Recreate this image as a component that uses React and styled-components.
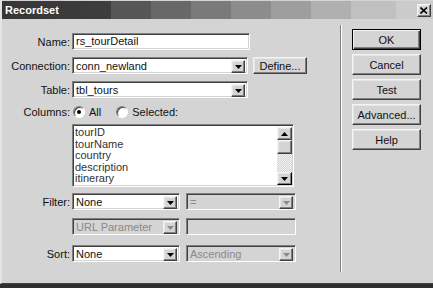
import React from "react";
import styled, { createGlobalStyle, css } from "styled-components";

const FACE = "#d4d4d4";

const Global = createGlobalStyle`
  *, *::before, *::after { box-sizing: border-box; }
  html, body { margin: 0; padding: 0; background: #2e2e2e; }
  body {
    font-family: "Liberation Sans", Arial, sans-serif;
    font-size: 11px;
    color: #111;
  }
`;

const sunken = css`
  border: 1px solid;
  border-color: #808080 #ffffff #ffffff #808080;
  box-shadow: inset 1px 1px #404040, inset -1px -1px ${FACE};
`;

const raised = css`
  border: 1px solid;
  border-color: #f4f4f4 #404040 #404040 #f4f4f4;
  box-shadow: inset -1px -1px #808080, inset 1px 1px #e6e6e6;
  background: ${FACE};
`;

function Arrow({ dir = "down", disabled }) {
  const pts = dir === "down" ? "0,0 7,0 3.5,4" : "0,4 7,4 3.5,0";
  return (
    <svg width="7" height="4" viewBox="0 0 7 4">
      <polygon points={pts} fill={disabled ? "#8a8a8a" : "#000"} />
    </svg>
  );
}

export default function App() {
  return (
    <>
      <Global />
      <Window>
        <TitleBar>
          <Title>Recordset</Title>
          <CloseButton>
            <svg width="8" height="7" viewBox="0 0 8 7">
              <path d="M0.5 0.5 L7 6.5 M7 0.5 L0.5 6.5" stroke="#000" strokeWidth="1.6" />
            </svg>
          </CloseButton>
        </TitleBar>
        <Body>
          <Form>
            <Field $mt={0}>
              <Label>Name:</Label>
              <TextBox $w={178}>rs_tourDetail</TextBox>
            </Field>
            <Field $mt={7}>
              <Label>Connection:</Label>
              <Controls>
                <Select value="conn_newland" w={176} />
                <PushButton $w={54} $h={17}>Define...</PushButton>
              </Controls>
            </Field>
            <Field $mt={7}>
              <Label>Table:</Label>
              <Select value="tbl_tours" w={176} />
            </Field>
            <Field $mt={7} $h={14}>
              <Label>Columns:</Label>
              <RadioGroup>
                <RadioOption>
                  <Radio $checked />
                  All
                </RadioOption>
                <RadioOption>
                  <Radio />
                  Selected:
                </RadioOption>
              </RadioGroup>
            </Field>
            <Field $mt={5} $h={63}>
              <span />
              <ListBox>
                <Items>
                  {["tourID", "tourName", "country", "description", "itinerary"].map(c => (
                    <Item key={c}>{c}</Item>
                  ))}
                </Items>
                <ScrollBar>
                  <ScrollButton><Arrow dir="up" /></ScrollButton>
                  <Thumb />
                  <Track />
                  <ScrollButton $focus><Arrow /></ScrollButton>
                </ScrollBar>
              </ListBox>
            </Field>
            <Field $mt={6}>
              <Label>Filter:</Label>
              <Controls $gap={6}>
                <Select value="None" w={108} />
                <Select value="=" w={110} disabled />
              </Controls>
            </Field>
            <Field $mt={8}>
              <span />
              <Controls $gap={6}>
                <Select value="URL Parameter" w={108} disabled />
                <TextBox $w={110} $disabled />
              </Controls>
            </Field>
            <Field $mt={10}>
              <Label>Sort:</Label>
              <Controls $gap={6}>
                <Select value="None" w={108} />
                <Select value="Ascending" w={110} disabled />
              </Controls>
            </Field>
          </Form>
          <Divider />
          <ButtonColumn>
            <PushButton $default>OK</PushButton>
            <PushButton>Cancel</PushButton>
            <PushButton>Test</PushButton>
            <PushButton>Advanced...</PushButton>
            <PushButton>Help</PushButton>
          </ButtonColumn>
        </Body>
      </Window>
    </>
  );
}

function Select({ value, w, disabled }) {
  return (
    <SelectBox $w={w} $disabled={disabled}>
      <SelectValue $disabled={disabled}>{value}</SelectValue>
      <DropButton>
        <Arrow disabled={disabled} />
      </DropButton>
    </SelectBox>
  );
}

const Window = styled.div`
  width: 433px;
  height: 284px;
  background: ${FACE};
  border-left: 2px solid #e4e4e4;
  border-bottom: 1px solid #404040;
  display: flex;
  flex-direction: column;
  overflow: hidden;
`;

const TitleBar = styled.div`
  height: 18px;
  margin-top: 1px;
  margin-left: -1px;
  display: flex;
  align-items: center;
  justify-content: space-between;
  padding: 0 2px 0 4px;
  background: linear-gradient(
    to right,
    #363636 0px, #3e3e3e 110px,
    #565656 110px, #565656 150px,
    #686868 150px, #686868 190px,
    #7a7a7a 190px, #7a7a7a 230px,
    #8c8c8c 230px, #8c8c8c 270px,
    #9e9e9e 270px, #9e9e9e 310px,
    #b0b0b0 310px, #b0b0b0 350px,
    #c0c0c0 350px, #c0c0c0 395px,
    #cbcbcb 395px
  );
`;

const Title = styled.span`
  color: #fff;
  font-weight: bold;
  font-size: 11px;
`;

const CloseButton = styled.div`
  ${raised};
  width: 14px;
  height: 13px;
  display: flex;
  align-items: center;
  justify-content: center;
`;

const Body = styled.div`
  flex: 1;
  display: flex;
`;

const Form = styled.div`
  width: 338px;
  padding-top: 14px;
  display: flex;
  flex-direction: column;
`;

const Field = styled.div`
  display: grid;
  grid-template-columns: 68px auto;
  column-gap: 2px;
  align-items: center;
  height: ${p => p.$h || 17}px;
  margin-top: ${p => p.$mt}px;
`;

const Label = styled.span`
  text-align: right;
  white-space: nowrap;
`;

const Controls = styled.div`
  display: flex;
  align-items: center;
  gap: ${p => p.$gap ?? 5}px;
  height: 100%;
`;

const TextBox = styled.div`
  ${sunken};
  width: ${p => p.$w}px;
  height: 17px;
  padding: 0 3px;
  line-height: 15px;
  background: ${p => (p.$disabled ? FACE : "#fff")};
`;

const SelectBox = styled.div`
  ${sunken};
  width: ${p => p.$w}px;
  height: 17px;
  display: flex;
  padding: 2px;
  background: ${p => (p.$disabled ? FACE : "#fff")};
`;

const SelectValue = styled.span`
  flex: 1;
  line-height: 13px;
  padding-left: 1px;
  white-space: nowrap;
  color: ${p => (p.$disabled ? "#8a8a8a" : "#111")};
`;

const DropButton = styled.span`
  ${raised};
  width: 14px;
  height: 13px;
  display: flex;
  align-items: center;
  justify-content: center;
`;

const PushButton = styled.div`
  ${raised};
  width: ${p => p.$w || 69}px;
  height: ${p => p.$h || 21}px;
  display: flex;
  align-items: center;
  justify-content: center;
  white-space: nowrap;
  ${p =>
    p.$default &&
    css`
      outline: 1px solid #000;
      outline-offset: -1px;
      border-color: #000 #404040 #404040 #000;
      box-shadow: inset 1px 1px #f4f4f4, inset -1px -1px #404040, inset -2px -2px #808080;
    `}
`;

const RadioGroup = styled.div`
  display: flex;
  align-items: center;
  gap: 15px;
  padding-left: 1px;
`;

const RadioOption = styled.label`
  display: flex;
  align-items: center;
  gap: 4px;
`;

const Radio = styled.span`
  position: relative;
  width: 12px;
  height: 12px;
  border-radius: 50%;
  border: 1px solid;
  border-color: #808080 #ffffff #ffffff #808080;
  box-shadow: inset 1px 1px #404040;
  background: #fff;
  ${p =>
    p.$checked &&
    css`
      &::after {
        content: "";
        position: absolute;
        left: 3px;
        top: 3px;
        width: 4px;
        height: 4px;
        border-radius: 50%;
        background: #000;
      }
    `}
`;

const ListBox = styled.div`
  ${sunken};
  width: 222px;
  height: 63px;
  background: #fff;
  display: flex;
  padding: 2px 1px 1px 2px;
`;

const Items = styled.div`
  flex: 1;
  overflow: hidden;
`;

const Item = styled.div`
  line-height: 11.6px;
  color: #333;
`;

const ScrollBar = styled.div`
  width: 15px;
  display: flex;
  flex-direction: column;
`;

const ScrollButton = styled.div`
  ${raised};
  height: 13px;
  display: flex;
  align-items: center;
  justify-content: center;
  ${p => p.$focus && css`border-color: #f4f4f4 #000 #000 #f4f4f4;`}
`;

const Thumb = styled.div`
  ${raised};
  height: 14px;
`;

const Track = styled.div`
  flex: 1;
  background-color: ${FACE};
  background-image: repeating-conic-gradient(#f2f2f2 0 25%, ${FACE} 0 50%);
  background-size: 2px 2px;
`;

const Divider = styled.div`
  width: 2px;
  margin-top: 6px;
  height: 247px;
  border-left: 1px solid #808080;
  border-right: 1px solid #fff;
`;

const ButtonColumn = styled.div`
  display: flex;
  flex-direction: column;
  gap: 4px;
  padding-top: 10px;
  margin-left: 10px;
`;
